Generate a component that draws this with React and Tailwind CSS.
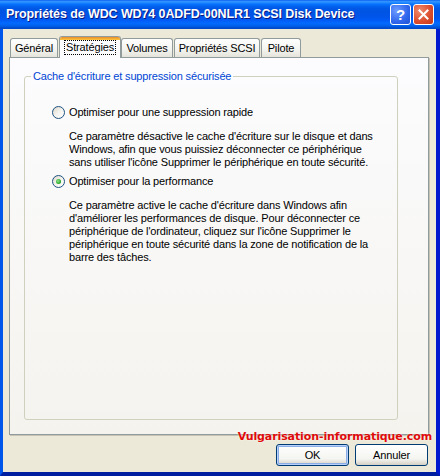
import React from "react";

const tabs = [
  { label: "Général", w: "w-[48px]" },
  { label: "Stratégies", w: "w-[62px]", active: true },
  { label: "Volumes", w: "w-[52px]" },
  { label: "Propriétés SCSI", w: "w-[86px]" },
  { label: "Pilote", w: "w-[40px]" },
];

const Radio = ({ checked }) => (
  <span className="w-[13px] h-[13px] shrink-0 rounded-full border border-[#1C5180] bg-[linear-gradient(135deg,#DCD7CB_0%,#F4F3EE_50%,#FFFFFF_100%)] flex items-center justify-center">
    {checked && (
      <span className="w-[5px] h-[5px] rounded-full bg-[radial-gradient(circle_at_40%_40%,#8EE88E,#21A121_70%)]" />
    )}
  </span>
);

const Option = ({ checked, label, children }) => (
  <div className="flex flex-col">
    <div className="flex items-center gap-[4px] h-[13px]">
      <Radio checked={checked} />
      <span className="leading-[13px]">{label}</span>
    </div>
    <p className="pl-[17px] mt-[11px] leading-[13px]">{children}</p>
  </div>
);

export default function App() {
  return (
    <div className="relative w-[440px] h-[476px] flex flex-col bg-[#0054E3] overflow-hidden font-['Liberation_Sans',sans-serif] text-[11px] tracking-[-0.15px] text-black select-none">
      {/* Title bar */}
      <div className="h-[29px] shrink-0 flex items-center pl-[6px] pr-[6px] bg-[linear-gradient(to_bottom,#0058EE_0%,#3593FF_4%,#288EFF_8%,#127DFF_12%,#036FFC_16%,#0262EE_22%,#0057E5_30%,#0054E3_40%,#0055EB_60%,#005BF5_70%,#026AFE_80%,#0062EF_88%,#0052D6_94%,#0047C6_100%)]">
        <span className="flex-1 text-white font-bold text-[12.5px] tracking-[-0.1px] [text-shadow:1px_1px_#0A1883] whitespace-nowrap">
          Propriétés de WDC WD74 0ADFD-00NLR1 SCSI Disk Device
        </span>
        <div className="flex gap-[2px]">
          <div className="w-[21px] h-[21px] rounded-[3px] border border-white bg-[radial-gradient(circle_at_30%_30%,#6D9BFF,#2F66EC_60%,#1F52D6)] flex items-center justify-center text-white font-bold text-[15px] leading-none">
            ?
          </div>
          <div className="w-[21px] h-[21px] rounded-[3px] border border-white bg-[radial-gradient(circle_at_30%_30%,#F08A6E,#DA4B2B_60%,#C23A1B)] flex items-center justify-center">
            <svg width="11" height="11" viewBox="0 0 11 11">
              <path d="M1.5 1.5L9.5 9.5M9.5 1.5L1.5 9.5" stroke="#FFFFFF" strokeWidth="2" strokeLinecap="square" />
            </svg>
          </div>
        </div>
      </div>

      {/* Body */}
      <div className="flex-1 flex flex-col bg-[#ECE9D8] border-l-[3px] border-l-[#0055EA] border-r-[4px] border-r-[#0019CF] border-b-[4px] border-b-[#001EA0] pl-[6px] pr-[8px] pt-[6px] pb-[6px]">
        {/* Tabs */}
        <div className="flex items-end h-[22px] pl-[1px] relative z-10">
          {tabs.map((t) =>
            t.active ? (
              <div
                key={t.label}
                className={`${t.w} h-[22px] -mb-px flex flex-col rounded-t-[3px] border border-b-0 border-[#919B9C] bg-[#FCFCFE] overflow-hidden`}
              >
                <div className="h-[3px] shrink-0 bg-[linear-gradient(to_bottom,#E68B2C,#FFC73C)]" />
                <div className="flex-1 flex items-start justify-center pt-[1px]">
                  <span className="px-[1px] leading-[13px] outline outline-1 outline-dotted outline-black">
                    {t.label}
                  </span>
                </div>
              </div>
            ) : (
              <div
                key={t.label}
                className={`${t.w} h-[19px] mr-[1px] flex items-center justify-center rounded-t-[3px] border border-b-0 border-[#919B9C] bg-[linear-gradient(to_bottom,#FFFFFF,#F3F3EF_60%,#E5E4DB)] leading-[13px]`}
              >
                {t.label}
              </div>
            )
          )}
        </div>

        {/* Tab panel */}
        <div className="h-[378px] w-[420px] flex flex-col border border-[#919B9C] shadow-[1px_1px_0_#C5C3B6] bg-[linear-gradient(to_bottom,#FCFCFE,#F4F3EE)] pl-[14px] pr-[30px] pt-[12px] pb-[14px]">
          <fieldset className="flex-1 border border-[#D0D0BF] rounded-[3px]">
            <legend className="ml-[6px] px-[2px] text-[#0046D5] leading-[13px]">
              Cache d'écriture et suppression sécurisée
            </legend>
            <div className="flex flex-col gap-[6px] pl-[27px] pr-[8px] pt-[23px]">
              <Option label="Optimiser pour une suppression rapide">
                Ce paramètre désactive le cache d'écriture sur le disque et dans
                <br />
                Windows, afin que vous puissiez déconnecter ce périphérique
                <br />
                sans utiliser l'icône Supprimer le périphérique en toute sécurité.
              </Option>
              <Option checked label="Optimiser pour la performance">
                Ce paramètre active le cache d'écriture dans Windows afin
                <br />
                d'améliorer les performances de disque. Pour déconnecter ce
                <br />
                périphérique de l'ordinateur, cliquez sur l'icône Supprimer le
                <br />
                périphérique en toute sécurité dans la zone de notification de la
                <br />
                barre des tâches.
              </Option>
            </div>
          </fieldset>
        </div>

        {/* Buttons */}
        <div className="mt-auto flex justify-end gap-[6px]">
          <button className="w-[73px] h-[22px] rounded-[3px] border border-[#003C74] bg-[linear-gradient(to_bottom,#FFFFFF,#F4F4F0_70%,#D6D0C5)] shadow-[inset_0_0_0_1px_#B9D1FA,inset_0_0_0_2px_#89ADE4] leading-[13px]">
            OK
          </button>
          <button className="w-[73px] h-[22px] rounded-[3px] border border-[#003C74] bg-[linear-gradient(to_bottom,#FFFFFF,#F4F4F0_70%,#D6D0C5)] leading-[13px]">
            Annuler
          </button>
        </div>
      </div>

      {/* Watermark */}
      <div className="absolute right-[8px] top-[429px] font-['DejaVu_Sans',sans-serif] font-bold text-[11px] text-[#E00A0A] tracking-[-0.1px] [text-shadow:0_0_2px_#FFFFFF]">
        Vulgarisation-informatique.com
      </div>
    </div>
  );
}
